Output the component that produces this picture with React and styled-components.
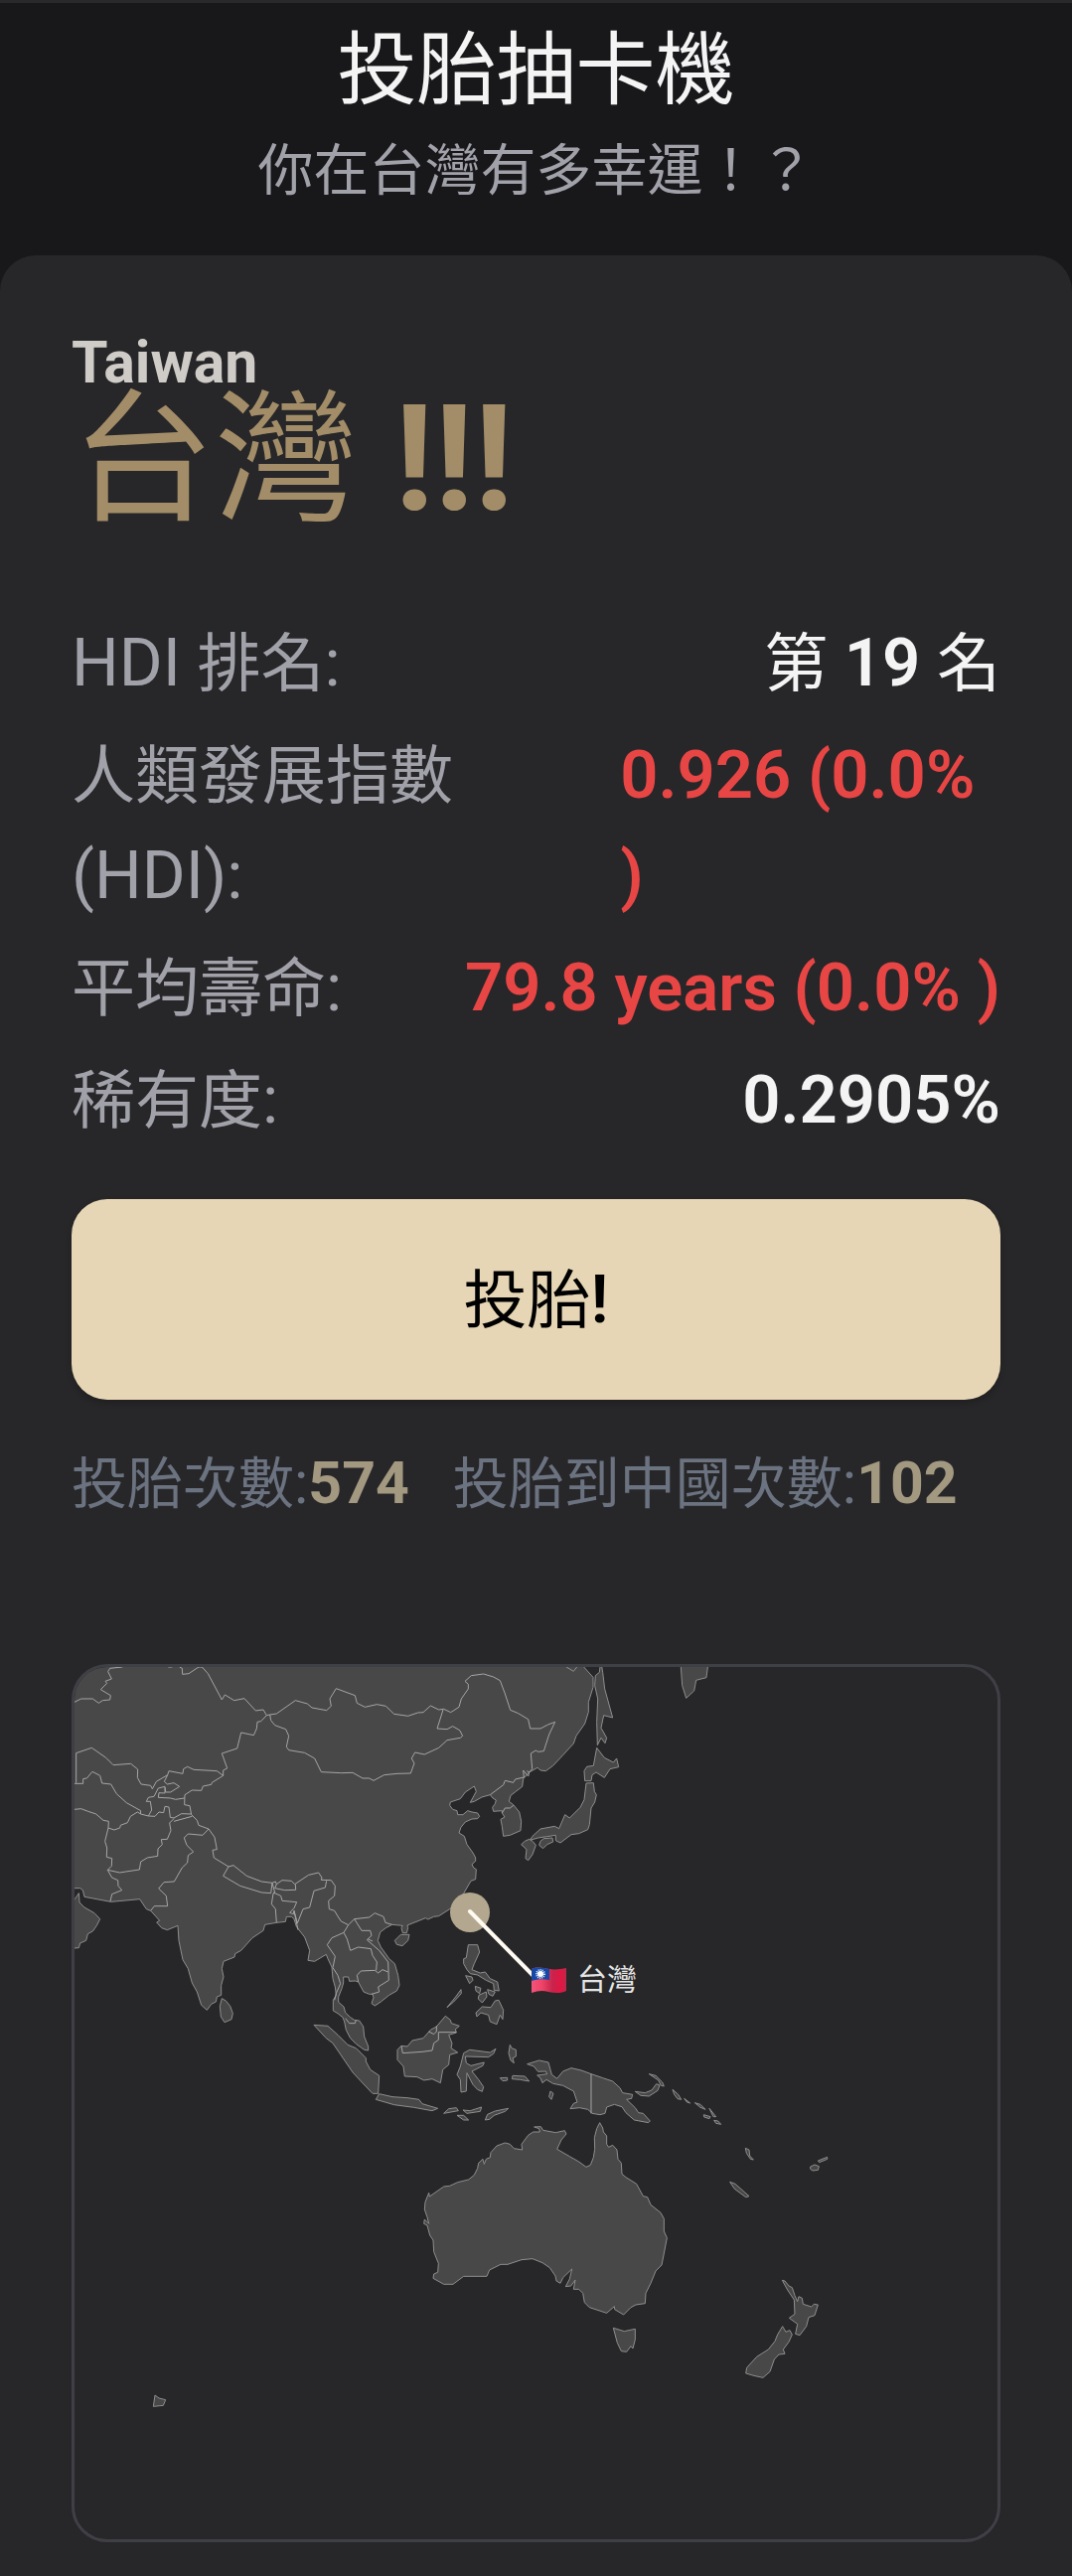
import React from "react";
import styled, { createGlobalStyle } from "styled-components";

const GlobalStyle = createGlobalStyle`
  * { box-sizing: border-box; }
  body {
    margin: 0;
    background: #18181a;
    color: #f4f4f5;
    font-family: Roboto, "Noto Sans CJK TC", sans-serif;
    font-weight: 400;
  }
`;

const Page = styled.div`
  border-top: 3px solid #29292b;
`;

const Header = styled.header`
  display: flex;
  flex-direction: column;
  align-items: center;
  gap: 4px;
  padding: 12px 36px 44px;
`;

const Title = styled.h1`
  margin: 0;
  font-size: 80px;
  line-height: 112px;
  font-weight: 400;
`;

const Subtitle = styled.p`
  margin: 0;
  color: #a1a1aa;
  font-size: 56px;
  line-height: 82px;
`;

const Card = styled.main`
  padding: 73px 72px 34px;
  border-radius: 36px 36px 0 0;
  background: #272729;
`;

const CountryEnglish = styled.p`
  margin: 0;
  color: #cfccc7;
  font-size: 59px;
  line-height: 70px;
  font-weight: 700;
`;

const Country = styled.h2`
  margin: 0 0 91px;
  color: #a38d68;
  font-size: 148px;
  line-height: 126px;
  font-weight: 700;
`;

/* Chinese runs are set a step smaller than the Latin text beside them;
   the short line height keeps them from stretching the line. */
const Han = styled.span`
  font-size: ${(p) => p.$size}px;
  line-height: 0.8;
  font-weight: 400;
`;

const Facts = styled.dl`
  display: flex;
  flex-direction: column;
  gap: 12px;
  margin: 0 0 49px;
  font-size: 67px;
  line-height: 101px;
`;

const Fact = styled.div`
  display: flex;
  justify-content: space-between;
`;

const FactLabel = styled.dt`
  color: #a1a1aa;
`;

const FactValue = styled.dd`
  margin: 0;
  font-weight: 600;
  color: ${(p) => (p.$alert ? "#e84545" : "#f4f4f5")};
`;

const DrawButton = styled.button`
  display: block;
  width: 100%;
  padding: 51px 36px;
  border: 0;
  border-radius: 36px;
  background: #e6d6b5;
  box-shadow: 0 3px 6px rgba(0, 0, 0, 0.2);
  color: #000;
  font-family: inherit;
  font-size: 67px;
  line-height: 100px;
  font-weight: 600;
  cursor: pointer;
`;

const Counters = styled.div`
  display: flex;
  gap: 44px;
  margin: 43px 0 141px;
  color: #6b7280;
  font-size: 59px;
  line-height: 82px;
`;

const Count = styled.strong`
  color: #a39880;
  font-weight: 700;
`;

const MapFrame = styled.figure`
  margin: 0;
  border: 3px solid #3f3f46;
  border-radius: 36px;
  overflow: hidden;
`;

const MapDrawing = styled.svg`
  display: block;
  width: 100%;
  height: auto;

  polygon,
  polyline {
    stroke: #8f8f8f;
    stroke-width: 3;
    stroke-linejoin: round;
  }
  polygon { fill: #484848; }
  polyline { fill: none; stroke: #a6a6a6; }
`;

const MapLabel = styled.text`
  fill: #e4e4e4;
  font-size: 30px;
`;

const REGIONS = [
  {
    name: "asia",
    shift: "translate(-15 -18)",
    land: [
      "20,20 1560,20 1583,54 1611,85 1611,115 1597,160 1597,190 1586,225 1560,262 1552,285 1520,320 1490,352 1468,368 1452,366 1443,358 1418,372 1400,392 1397,415 1375,432 1362,442 1357,460 1370,470 1388,492 1394,520 1392,548 1360,562 1340,565 1336,535 1332,514 1344,507 1336,495 1336,488 1310,490 1307,478 1315,467 1318,456 1308,450 1300,440 1275,447 1252,460 1240,463 1258,430 1252,414 1225,432 1210,452 1180,462 1178,472 1187,484 1200,488 1202,500 1218,500 1232,488 1245,492 1262,495 1268,505 1262,512 1245,513 1225,522 1212,538 1206,555 1222,565 1230,590 1248,615 1256,630 1256,640 1245,650 1250,660 1258,665 1256,695 1242,700 1220,738 1200,765 1178,785 1145,806 1130,808 1112,816 1105,812 1050,834 1052,842 1048,857 1036,857 1032,842 1036,835 1004,832 985,842 968,855 961,880 970,900 995,935 1012,950 1022,985 1026,1015 1018,1032 995,1045 970,1065 952,1077 942,1070 948,1052 945,1042 935,1042 918,1035 902,1005 892,1002 875,1003 872,990 857,990 857,1008 852,1025 842,1050 842,1066 858,1080 863,1098 878,1112 890,1120 905,1122 917,1140 920,1170 932,1200 932,1212 920,1210 895,1192 878,1175 865,1150 860,1125 855,1112 840,1100 826,1092 826,1060 835,1045 832,1020 825,995 822,960 810,935 805,922 770,943 750,940 755,910 740,870 715,838 708,815 700,808 685,808 682,823 655,826 620,832 615,850 582,872 548,910 530,920 528,930 495,943 490,965 495,990 488,1015 488,1045 475,1050 472,1065 458,1072 445,1090 428,1075 415,1035 400,1008 388,965 372,938 360,880 357,835 325,848 308,842 293,825 302,820 275,790 262,785 242,755 155,763 75,748 70,728 62,722 20,722",
      "20,755 46,755 58,737 60,765 75,780 105,797 122,815 112,835 100,852 85,860 80,880 62,888 58,902 20,905",
      "490,1055 502,1062 515,1078 523,1100 519,1118 498,1127 487,1110 484,1078",
    ],
    borders: [
      "45,160 65,150 100,150 118,163 130,155 152,153 154,140 124,122 143,103 138,97 157,90 146,68 152,58 190,54",
      "328,54 340,54",
      "362,54 370,58 371,76 390,74 420,54 430,54 448,74 490,153 499,138 527,155 558,149 592,186 615,183 625,200 635,198",
      "625,200 608,218 597,220 595,240 586,260 548,252 536,300 490,315 506,360 494,366 494,382 460,403 458,409 433,414 428,427 400,426 378,440 377,470 393,473 398,500 415,517 420,532 450,543 468,568 475,605 462,607 466,630 510,657 525,653 565,685 610,702 642,706 652,702 655,710 672,698 700,700 710,710 752,682 782,675 792,690 790,697 820,698 832,715 830,745 812,760 814,785 830,790 842,810 850,822 872,833 890,815 935,810 952,797 978,808 984,826 1004,832",
      "635,198 655,195 712,155 748,165 762,177 806,185 820,172 816,150 835,119 892,140 898,163 922,175 958,167 985,172 1010,196 1052,202 1082,192 1098,191 1120,171 1145,183 1160,181 1181,191 1206,175 1213,150 1234,120 1234,106 1224,97 1243,80 1280,75 1310,84 1330,95 1345,135 1361,184 1385,194 1415,212 1421,240 1452,240 1475,228 1496,220 1478,258 1462,308 1445,310 1438,306 1423,315 1427,362 1418,372 1411,368",
      "635,198 638,215 650,230 683,242 692,262 685,295 692,305 740,313 770,330 790,371 850,374 885,373 915,390 935,390 948,397 980,380 1020,376 1060,375 1071,345 1063,330 1073,312 1102,318 1145,298 1170,275 1210,268 1217,262 1208,245 1187,233 1170,242 1140,240 1158,183",
      "1300,440 1340,410 1345,397 1370,403 1376,393 1402,387 1400,366 1415,384 1418,372",
      "1336,495 1345,480 1360,480 1370,472",
      "45,406 71,406 71,392 82,390 99,370 122,382 128,405 155,408 172,437 202,464 245,488 244,498",
      "50,404 50,314 97,298 140,328 162,350 215,346 236,363 235,388 246,408 275,412 280,422 292,400 326,380 330,368 372,376 374,362 386,355 405,364 475,368 494,382",
      "45,484 65,482 86,490 110,498 132,517 148,520 147,540 165,546 182,540 184,532 205,524 214,505 235,492 245,498 268,504 278,486 274,460 262,460 268,448 285,445 298,420 318,415 320,432 335,432 362,415 345,404 325,408 316,400 326,380",
      "318,418 318,435 300,434 298,448 335,450 350,454 377,450",
      "268,504 288,505 300,492 314,494 318,475 330,477 334,508 345,510 368,497 398,498",
      "345,520 400,505",
      "147,540 137,580 143,600 142,628 158,632 157,655 145,667 182,675 200,672 241,666 245,642 265,630 296,625 297,603 310,590 307,575 325,574 336,548 332,525 345,512",
      "145,667 158,690 176,698 177,715 188,728 158,740 153,762",
      "450,543 432,562 388,558 376,570 384,592 404,612 388,623 386,645 370,660 346,702 315,704 299,723 322,745 326,776 286,776 275,790",
      "510,657 494,685 545,715 610,735 638,737 642,706",
      "655,710 650,722 680,728 713,727 712,710",
      "642,706 650,735 645,738 640,770 652,785 655,826",
      "645,735 668,745 672,760 716,764 708,782 695,796 706,800 708,790 720,848",
      "708,790 718,828 735,785 755,780 768,730 802,720 806,700",
      "872,833 858,856 822,872 808,893 832,928 825,962 840,985 848,1010 835,1040 830,1060",
      "858,856 868,875 878,910 902,900 940,905 945,925 958,945 956,970",
      "890,815 912,850 938,850 942,865 928,878 965,910 992,945 994,1000 962,1020 965,1035 942,1042",
      "930,875 945,882",
      "902,1005 898,985 910,972 952,970 962,978 975,968 992,975",
      "863,1115 875,1130 892,1130 895,1120",
    ],
  },
  {
    name: "japan-and-philippines",
    shift: "translate(285 -18)",
    land: [
      "735,40 740,70 746,120 770,207 743,200 735,238 752,268 747,284 735,268 724,290 722,220 725,150 716,110 718,80 730,70 732,54",
      "630,54 652,67 662,54 662,40 630,40",
      "975,40 980,110 992,148 1016,126 1022,94 1053,86 1059,40",
      "722,298 745,328 772,342 782,330 788,356 762,362 745,388 720,372 708,380 705,398 686,398 684,368 692,355 712,352",
      "690,405 712,404 715,430 721,440 716,462 705,480 700,530 695,545 668,557 645,560 612,585 598,578 598,562 572,566 545,570 520,577 528,565 552,543 595,535 608,542 626,500 640,510 672,478 684,455",
      "518,574 528,580 538,592 528,620 515,638 507,632 510,605 494,590 505,580",
      "562,572 588,570 590,582 572,590 560,602 548,592 552,580",
      "130,862 156,862 152,880 135,896 118,892 112,880",
      "334,893 362,893 368,915 352,950 345,968 370,978 385,975 400,995 422,1005 427,1032 412,1030 410,1010 388,1000 362,984 340,980 330,968 320,950 320,935 328,932",
      "326,986 345,990 348,1000 338,1010",
      "312,1028 313,1040 290,1065 270,1082 296,1050",
      "355,1018 372,1024 368,1040 357,1032",
      "392,1028 415,1035 408,1048 396,1042",
      "366,1045 388,1035 390,1050 376,1068 364,1056",
      "426,1060 440,1090 438,1118 430,1105 420,1133 400,1125 395,1105 372,1098 360,1110 357,1098 376,1080 402,1082 415,1062",
    ],
    borders: [],
  },
  {
    name: "indonesia",
    shift: "translate(225 242)",
    land: [
      "48,355 90,358 120,385 150,415 175,425 205,455 205,465 218,490 245,508 242,562 225,562 190,525 165,498 120,432 105,410 85,395",
      "245,563 285,572 330,575 365,580 375,593 422,607 405,614 350,604 290,596 235,580",
      "445,328 460,340 463,350 487,358 475,368 478,378 455,385 465,410 462,425 482,438 458,445 455,475 437,490 430,530 405,518 380,522 360,512 322,510 318,480 300,460 300,430 312,418 330,420 345,402 378,395 400,370 418,360",
      "597,427 590,442 575,452 505,450 508,470 522,478 562,468 558,478 525,495 545,520 560,542 556,556 542,550 528,535 510,500 508,555 492,558 490,520 480,505 490,480 500,440 518,430 580,438",
      "640,415 645,425 658,430 658,450 648,455 652,470 642,462 636,440",
      "610,515 632,514 632,522 618,524",
      "648,508 685,510 698,525 670,520 646,518",
      "440,622 455,608 478,605 484,614",
      "498,612 520,614 554,603 550,616 510,622",
      "480,628 500,628 515,642 500,642",
      "565,642 572,625 595,615 635,607 625,616 592,628 578,640",
      "762,555 771,562 765,580 758,572",
    ],
    borders: [
      "312,418 316,440 375,436 405,432 410,410 424,400 424,377 478,377",
      "395,375 410,383 418,375 418,358",
    ],
  },
  {
    name: "oceania",
    shift: "translate(325 342)",
    land: [
      "392,173 428,162 456,168 466,205 482,217 500,195 525,185 555,192 585,203 620,215 650,225 672,245 680,260 710,265 707,277 692,280 718,305 728,320 742,322 763,345 758,350 715,342 690,320 678,302 655,295 632,303 627,322 612,326 588,322 575,310 550,305 522,308 532,292 543,288 532,255 500,238 470,232 450,220 438,230 432,215 422,207 452,203 448,195 425,196 412,180",
      "718,256 748,260 768,252 782,233 792,237 786,253 760,270 735,268",
      "760,203 780,208 800,228 805,240 796,238 788,222",
      "831,250 848,265 857,280 846,278 836,265",
      "866,277 884,291 874,288",
      "898,290 915,295 930,310 915,304",
      "942,307 962,332 954,332",
      "925,326 945,332 942,338 926,333",
      "956,343 968,345 977,355 962,352",
      "1051,427 1062,432 1064,450 1075,462 1066,460 1054,442",
      "1004,529 1020,535 1062,572 1052,575 1018,550",
      "1247,483 1260,477 1273,482 1270,493 1254,495 1247,490",
      "1270,465 1298,454 1298,460 1274,470",
      "413,363 433,362 440,373 478,380 505,374 510,384 495,402 482,430 520,452 548,468 570,484 583,478 592,455 596,430 595,395 602,368 611,350 620,366 622,378 632,390 632,415 638,424 650,418 663,432 666,460 676,472 678,505 690,515 722,535 742,572 755,575 765,598 795,622 805,640 805,678 814,698 804,750 798,780 780,798 765,835 750,865 748,896 720,900 705,908 683,930 656,914 655,905 632,925 580,908 565,893 560,865 548,853 532,853 537,825 524,843 508,845 520,822 527,792 500,818 492,835 480,828 477,813 460,788 438,773 408,761 375,764 333,778 312,778 278,795 270,814 200,814 168,838 140,838 108,820 110,807 122,802 124,775 110,740 108,705 98,690 90,660 80,655 82,642 95,655 90,635 82,612 84,590 95,562 97,573 140,543 158,541 182,530 215,522 232,508 242,488 245,472 258,460 262,475 268,460 280,455 282,440 300,420 325,411 340,415 352,428 377,432 375,415 395,388 410,378 430,378 428,368",
      "652,970 685,980 718,973 718,1005 711,1032 705,1025 692,1042 676,1040 664,1015",
      "1162,826 1170,828 1182,843 1192,848 1200,872 1208,890 1212,875 1222,880 1225,898 1250,906 1258,898 1270,900 1260,932 1242,938 1235,965 1215,992 1202,988 1208,958 1183,940 1200,928 1198,885 1178,855",
      "1163,965 1173,982 1185,977 1192,990 1182,1012 1165,1035 1170,1048 1152,1050 1138,1065 1125,1102 1104,1120 1080,1115 1052,1107 1055,1090 1085,1057 1120,1035 1140,1010 1148,990",
    ],
    borders: ["585,203 585,322"],
  },
  {
    name: "kerguelen",
    shift: "translate(-15 662)",
    land: ["288,213 300,222 320,227 313,244 283,247"],
    borders: [],
  },
];

function WorldMap() {
  return (
    <MapFrame>
      <MapDrawing viewBox="0 0 929 878" role="img" aria-label="台灣">
        <defs>
          <linearGradient id="flagCloth" x1="0" x2="1">
            <stop offset="0" stopColor="#f2547a" />
            <stop offset="0.3" stopColor="#ee4468" />
            <stop offset="0.6" stopColor="#c8244c" />
            <stop offset="0.85" stopColor="#e01742" />
            <stop offset="1" stopColor="#b92a4c" />
          </linearGradient>
        </defs>
        {REGIONS.map((region) => (
          <g key={region.name} transform={`${region.shift} scale(0.33333)`}>
            {region.land.map((points) => (
              <polygon key={points} points={points} />
            ))}
            {region.borders.map((points) => (
              <polyline key={points} points={points} />
            ))}
          </g>
        ))}
        <circle cx="398" cy="247" r="20" fill="#b3a88f" />
        <path d="M398 246L462 311" stroke="#fffaf2" strokeWidth="4" strokeLinecap="round" />
        <g transform="translate(460 302)">
          <path d="M0 2C6-1 12 1 18 2C24 3 30 2 35 1V24C29 27 23 26 17 25C11 23 6 24 0 26Z" fill="url(#flagCloth)" />
          <path d="M0 2C6-1 12 1 18 2V13C12 12 6 12 0 14Z" fill="#1748a5" />
          <circle cx="9" cy="7" r="4" fill="none" stroke="#d9ecff" strokeWidth="2" strokeDasharray="1 1" />
          <circle cx="9" cy="7" r="3" fill="#fff" />
        </g>
        <MapLabel x="506" y="325">台灣</MapLabel>
      </MapDrawing>
    </MapFrame>
  );
}

export default function App() {
  return (
    <Page lang="zh-Hant">
      <GlobalStyle />
      <Header>
        <Title>投胎抽卡機</Title>
        <Subtitle>你在台灣有多幸運！？</Subtitle>
      </Header>
      <Card>
        <CountryEnglish>Taiwan</CountryEnglish>
        <Country>
          <Han $size={144}>台灣</Han> !!!
        </Country>
        <Facts>
          <Fact>
            <FactLabel>HDI <Han $size={64}>排名</Han>:</FactLabel>
            <FactValue><Han $size={64}>第</Han> 19 <Han $size={64}>名</Han></FactValue>
          </Fact>
          <Fact>
            <FactLabel><Han $size={64}>人類發展指數</Han> (HDI):</FactLabel>
            <FactValue $alert>0.926 (0.0% )</FactValue>
          </Fact>
          <Fact>
            <FactLabel><Han $size={64}>平均壽命</Han>:</FactLabel>
            <FactValue $alert>79.8 years (0.0% )</FactValue>
          </Fact>
          <Fact>
            <FactLabel><Han $size={64}>稀有度</Han>:</FactLabel>
            <FactValue>0.2905%</FactValue>
          </Fact>
        </Facts>
        <DrawButton type="button"><Han $size={64}>投胎</Han>!</DrawButton>
        <Counters>
          <span><Han $size={56}>投胎次數</Han>:<Count>574</Count></span>
          <span><Han $size={56}>投胎到中國次數</Han>:<Count>102</Count></span>
        </Counters>
        <WorldMap />
      </Card>
    </Page>
  );
}
